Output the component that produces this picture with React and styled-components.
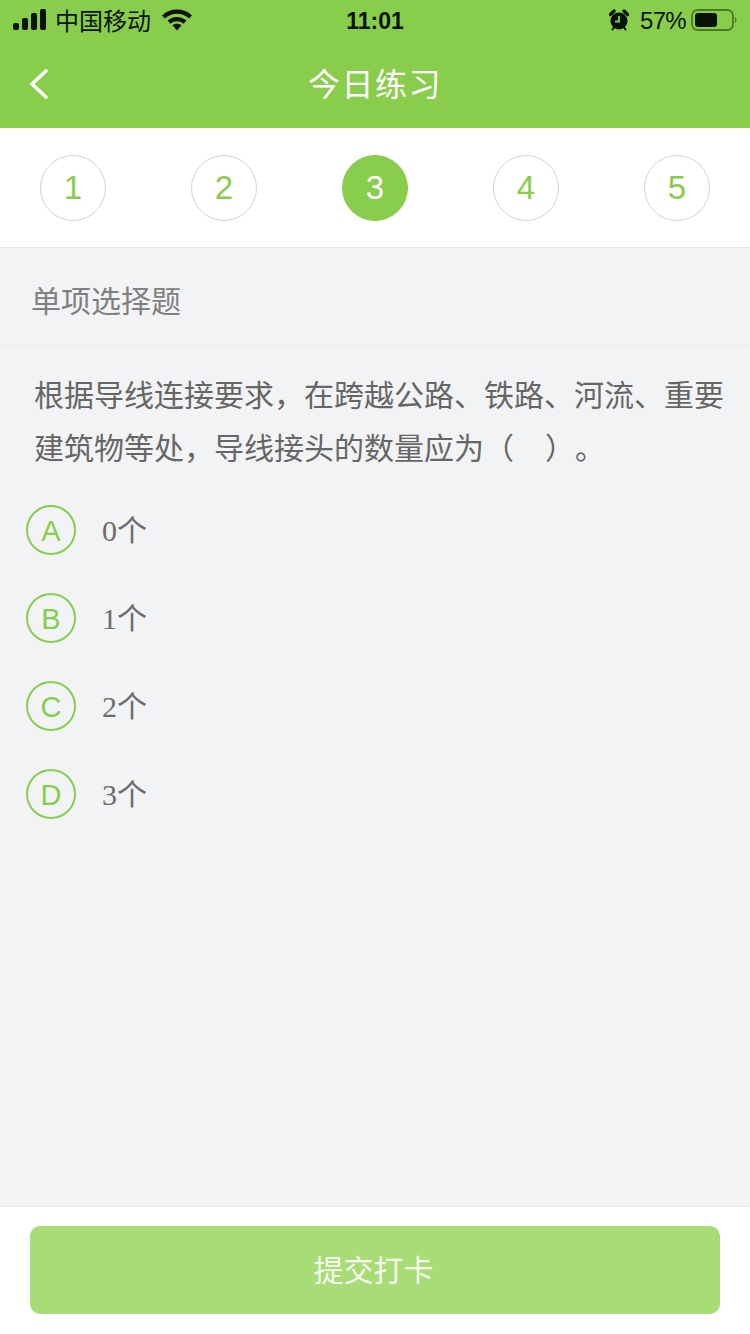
import React from "react";
import styled, { createGlobalStyle } from "styled-components";

const Global = createGlobalStyle`
  html, body { margin: 0; padding: 0; background: #f2f3f5; }
  body { font-family: "Liberation Sans", "Noto Sans CJK SC", sans-serif; }
`;
const Page = styled.div`
  width: 750px; height: 1334px; display: flex; flex-direction: column; background: #f2f3f5; overflow: hidden;
`;
const Header = styled.header`
  height: 128px; flex: none; background: #88cd4b; display: flex; flex-direction: column;
`;
const StatusBar = styled.div`
  height: 40px; display: flex; align-items: center; justify-content: space-between; padding: 0 13px; color: #0b1206; font-size: 24px; position: relative;
`;
const StatusGroup = styled.div`
  display: flex; align-items: center;
`;
const Carrier = styled.span`
  margin: 0 11px 0 8px; font-size: 24px; padding-bottom: 2px;
`;
const Clock = styled.span`
  position: absolute; left: 0; right: 0; text-align: center; font-size: 23px; font-weight: 700; padding-top: 2px; pointer-events: none;
`;
const Percent = styled.span`
  margin: 0 5px 0 11px; font-size: 24px; letter-spacing: -0.7px; padding-top: 2px;
`;
const NavBar = styled.div`
  flex: 1; display: flex; align-items: center; justify-content: center; position: relative; padding-bottom: 5px;
`;
const BackIcon = styled.svg`
  position: absolute; left: 28px; top: 27px; width: 22px; height: 34px;
`;
const Title = styled.h1`
  margin: 0; color: #fff; font-size: 32px; font-weight: 400; letter-spacing: 1.5px;
`;
const Steps = styled.div`
  height: 120px; flex: none; box-sizing: border-box; background: #fff; border-bottom: 1px solid #e6e6e6; display: flex; align-items: center; justify-content: space-between; padding: 0 40px 0;
`;
const Step = styled.div`
  width: 66px; height: 66px; box-sizing: border-box; border-radius: 50%; display: flex; align-items: center; justify-content: center; font-size: 33px;
  color: ${p => (p.$active ? "#fff" : "#88cd4b")};
  background: ${p => (p.$active ? "#88cd4b" : "#fff")};
  border: 1px solid ${p => (p.$active ? "#88cd4b" : "#d4d4d4")};
`;
const SectionLabel = styled.div`
  height: 98px; flex: none; box-sizing: border-box; border-bottom: 1px solid #e9eaec; padding: 4px 31px 0; display: flex; align-items: center; color: #808080; font-size: 30px;
`;
const Question = styled.p`
  margin: 0; padding: 23px 20px 0 34px; color: #666; font-size: 30px; line-height: 53px; flex: none; text-spacing-trim: space-all;
`;
const Gap = styled.span`
  display: inline-block; width: 31px;
`;
const Options = styled.div`
  display: flex; flex-direction: column; gap: 38px; padding: 30px 0 0 26px; flex: 1;
`;
const Option = styled.div`
  display: flex; align-items: center; height: 50px;
`;
const Badge = styled.span`
  width: 50px; height: 50px; box-sizing: border-box; border-radius: 50%; border: 2px solid #88cd4b; color: #88cd4b; display: flex; align-items: center; justify-content: center; font-size: 29px; padding-top: 2px;
`;
const OptionText = styled.span`
  margin-left: 26px; padding-bottom: 4px; color: #6c6c6c; font-size: 30px; font-family: "Liberation Serif", "Noto Sans CJK SC", serif;
`;
const Footer = styled.footer`
  height: 128px; flex: none; box-sizing: border-box; background: #fff; border-top: 1px solid #e9e9e9; padding: 19px 30px 0;
`;
const Submit = styled.button`
  width: 690px; height: 88px; border: 0; border-radius: 10px; background: #a8dc76; color: #f6fbef; font-size: 30px; font-family: inherit; padding: 0 3px 4px 0;
`;

const Signal = () => (
  <svg width="34" height="22" viewBox="0 0 34 22" fill="#0b1206">
    <rect x="0" y="14" width="6" height="7" rx="2" />
    <rect x="9" y="9" width="6" height="12" rx="2" />
    <rect x="18" y="4" width="6" height="17" rx="2" />
    <rect x="27" y="0" width="6" height="21" rx="2" />
  </svg>
);
const Wifi = () => (
  <svg width="30" height="22" viewBox="0 0 30 22" fill="none" stroke="#0b1206" strokeWidth="4.2">
    <path d="M1.5 8C9 .8 21 .8 28.5 8" />
    <path d="M7 13.2c4.6-4 11.4-4 16 0" />
    <path d="M10.5 16.2 15 21.5l4.5-5.3c-2.6-2-6.4-2-9 0z" fill="#0b1206" stroke="none" />
  </svg>
);
const Alarm = () => (
  <svg width="20" height="22" viewBox="0 0 20 22">
    <circle cx="10" cy="12" r="8.5" fill="#0b1206" />
    <path d="M1.5 5.5 5 2M18.5 5.5 15 2" stroke="#0b1206" strokeWidth="3.2" strokeLinecap="round" />
    <path d="M3.5 20.5 5 18.5M16.5 20.5 15 18.5" stroke="#0b1206" strokeWidth="2" strokeLinecap="round" />
    <path d="M10 7v5.5H6" stroke="#88cd4b" strokeWidth="1.8" fill="none" />
  </svg>
);
const Battery = () => (
  <svg width="46" height="22" viewBox="0 0 46 22">
    <rect x="1" y="1" width="41" height="20" rx="5.5" fill="none" stroke="#4c7a26" strokeWidth="1.8" />
    <rect x="4" y="4" width="22" height="14" rx="3" fill="#0b1206" />
    <path d="M44 8c1 .5 1.5 1.6 1.5 3s-.5 2.5-1.5 3z" fill="#4c7a26" />
  </svg>
);

const options = [["A", "0个"], ["B", "1个"], ["C", "2个"], ["D", "3个"]];

export default function App() {
  return (
    <Page>
      <Global />
      <Header>
        <StatusBar>
          <Clock>11:01</Clock>
          <StatusGroup>
            <Signal />
            <Carrier>中国移动</Carrier>
            <Wifi />
          </StatusGroup>
          <StatusGroup>
            <Alarm />
            <Percent>57%</Percent>
            <Battery />
          </StatusGroup>
        </StatusBar>
        <NavBar>
          <BackIcon viewBox="0 0 22 34" fill="none" stroke="#fff" strokeWidth="3.6" strokeLinecap="round" strokeLinejoin="miter">
            <path d="M18 4 4 17l14 13" />
          </BackIcon>
          <Title>今日练习</Title>
        </NavBar>
      </Header>
      <Steps>
        {[1, 2, 3, 4, 5].map(n => (
          <Step key={n} $active={n === 3}>{n}</Step>
        ))}
      </Steps>
      <SectionLabel>单项选择题</SectionLabel>
      <Question>根据导线连接要求，在跨越公路、铁路、河流、重要建筑物等处，导线接头的数量应为（<Gap />）。</Question>
      <Options>
        {options.map(([k, t]) => (
          <Option key={k}>
            <Badge>{k}</Badge>
            <OptionText>{t}</OptionText>
          </Option>
        ))}
      </Options>
      <Footer>
        <Submit>提交打卡</Submit>
      </Footer>
    </Page>
  );
}
